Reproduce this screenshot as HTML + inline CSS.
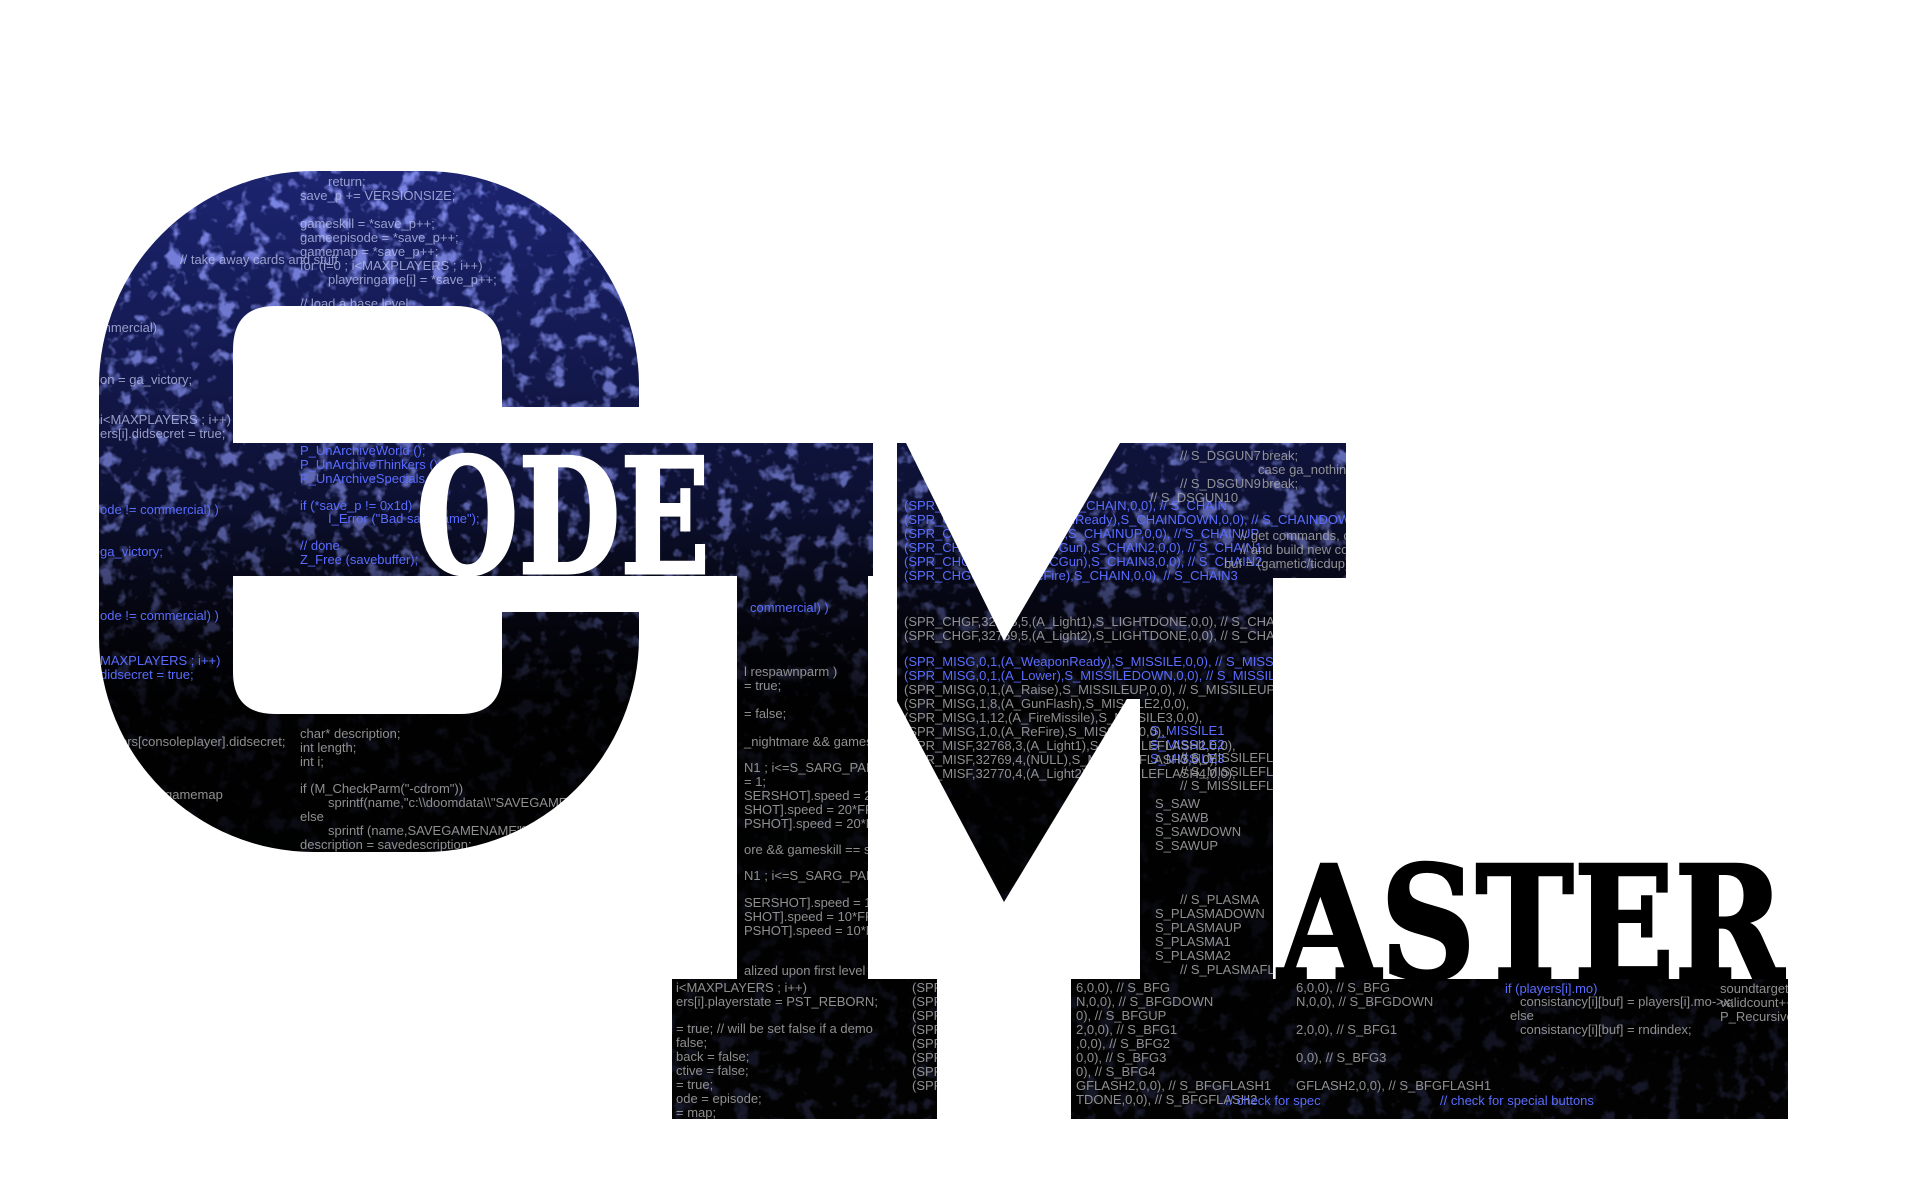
<!DOCTYPE html>
<html><head><meta charset="utf-8"><style>
html,body{margin:0;padding:0;background:#fff;width:1920px;height:1200px;overflow:hidden}
svg{display:block}
.c{font-family:"Liberation Sans Narrow","Liberation Sans",sans-serif;font-size:13px}
</style></head><body>
<svg width="1920" height="1200" viewBox="0 0 1920 1200" xmlns="http://www.w3.org/2000/svg">
<defs>
<linearGradient id="g" x1="0" y1="170" x2="0" y2="1130" gradientUnits="userSpaceOnUse">
<stop offset="0" stop-color="#1c2470"/>
<stop offset="0.18" stop-color="#171e5e"/>
<stop offset="0.33" stop-color="#111644"/>
<stop offset="0.5" stop-color="#0a0c20"/>
<stop offset="0.65" stop-color="#060709"/>
<stop offset="1" stop-color="#0a0a0a"/>
</linearGradient>
<linearGradient id="fade" x1="0" y1="170" x2="0" y2="1130" gradientUnits="userSpaceOnUse">
<stop offset="0" stop-color="#000" stop-opacity="0"/>
<stop offset="0.35" stop-color="#000" stop-opacity="0.25"/>
<stop offset="0.55" stop-color="#000" stop-opacity="0.9"/>
<stop offset="0.8" stop-color="#000" stop-opacity="0.93"/>
<stop offset="1" stop-color="#000" stop-opacity="0.8"/>
</linearGradient>
<filter id="n" x="0" y="0" width="100%" height="100%">
<feTurbulence type="fractalNoise" baseFrequency="0.06" numOctaves="3" seed="4"/>
<feColorMatrix type="matrix" values="0 0 0 0 0.2  0 0 0 0 0.24  0 0 0 0 0.8  0 0 0 5 -2.7"/>
</filter>
<mask id="m" maskUnits="userSpaceOnUse" x="0" y="0" width="1920" height="1200">
<rect x="99" y="171" width="540" height="681" rx="215" ry="215" fill="#fff"/>
<path d="M233 350 Q233 306 275 306 L455 306 Q502 306 502 353 L502 407 L700 407 L700 612 L502 612 L502 672 Q502 714 460 714 L275 714 Q233 714 233 672 Z" fill="#000"/>
<rect x="233" y="443" width="640" height="133" fill="#fff"/>
<rect x="737" y="575" width="131" height="405" fill="#fff"/>
<rect x="672" y="979" width="265" height="140" fill="#fff"/>
<polygon points="897,443 906,443 1004,641 1120,443 1346,443 1346,578 1273,578 1273,980 1140,980 1140,699 1127,699 1004,902 897,701" fill="#fff"/>
<rect x="1071" y="979" width="717" height="140" fill="#fff"/>
</mask>
</defs>
<g mask="url(#m)">
<rect x="0" y="0" width="1920" height="1200" fill="url(#g)"/>
<rect x="0" y="0" width="1920" height="1200" filter="url(#n)"/>
<rect x="0" y="0" width="1920" height="1200" fill="url(#fade)"/>
<g class="c" fill="#b8bee8" opacity="0.8">
<text x="328" y="186">return;</text>
<text x="300" y="200">save_p += VERSIONSIZE;</text>
<text x="300" y="228">gameskill = *save_p++;</text>
<text x="300" y="242">gameepisode = *save_p++;</text>
<text x="300" y="256">gamemap = *save_p++;</text>
<text x="180" y="264">// take away cards and stuff</text>
<text x="300" y="270">for (i=0 ; i&lt;MAXPLAYERS ; i++)</text>
<text x="328" y="284">playeringame[i] = *save_p++;</text>
<text x="300" y="308">// load a base level</text>
<text x="100" y="332">mmercial)</text>
<text x="100" y="384">on = ga_victory;</text>
<text x="100" y="424">i&lt;MAXPLAYERS ; i++)</text>
<text x="100" y="438">ers[i].didsecret = true;</text>
</g>
<g class="c" fill="#5a6cff">
<text x="300" y="455">P_UnArchiveWorld ();</text>
<text x="300" y="469">P_UnArchiveThinkers ();</text>
<text x="300" y="483">P_UnArchiveSpecials ();</text>
<text x="300" y="510">if (*save_p != 0x1d)</text>
<text x="328" y="523">I_Error ("Bad savegame");</text>
<text x="300" y="550">// done</text>
<text x="300" y="564">Z_Free (savebuffer);</text>
<text x="100" y="514">ode != commercial) )</text>
<text x="100" y="556">ga_victory;</text>
<text x="100" y="620">ode != commercial) )</text>
<text x="100" y="665">MAXPLAYERS ; i++)</text>
<text x="100" y="679">didsecret = true;</text>
<text x="750" y="612">commercial) )</text>
<text x="904" y="510">(SPR_CHGG,0,0,(A_Light1),S_CHAIN,0,0), // S_CHAIN</text>
<text x="904" y="524">(SPR_CHGG,0,4,(A_WeaponReady),S_CHAINDOWN,0,0), // S_CHAINDOWN</text>
<text x="904" y="538">(SPR_CHGG,0,1,(A_Raise),S_CHAINUP,0,0), // S_CHAINUP</text>
<text x="904" y="552">(SPR_CHGG,0,4,(A_FireCGun),S_CHAIN2,0,0), // S_CHAIN1</text>
<text x="904" y="566">(SPR_CHGG,1,4,(A_FireCGun),S_CHAIN3,0,0), // S_CHAIN2</text>
<text x="904" y="580">(SPR_CHGG,1,0,(A_ReFire),S_CHAIN,0,0), // S_CHAIN3</text>
<text x="904" y="666">(SPR_MISG,0,1,(A_WeaponReady),S_MISSILE,0,0), // S_MISSILE</text>
<text x="904" y="680">(SPR_MISG,0,1,(A_Lower),S_MISSILEDOWN,0,0), // S_MISSILEDOWN</text>
<text x="1150" y="735">S_MISSILE1</text>
<text x="1150" y="749">S_MISSILE2</text>
<text x="1150" y="763">S_MISSILE3</text>
</g>
<g class="c" fill="#a8a8a8" opacity="0.85">
<text x="1180" y="460">// S_DSGUN7</text>
<text x="1262" y="460">break;</text>
<text x="1258" y="474">case ga_nothing:</text>
<text x="1262" y="488">break;</text>
<text x="1180" y="488">// S_DSGUN9</text>
<text x="1150" y="502">// S_DSGUN10</text>
<text x="1240" y="540">// get commands, check consistancy</text>
<text x="1240" y="554">// and build new consistancy</text>
<text x="1224" y="568">buf = (gametic/ticdup)%BACKUPTICS;</text>
<text x="904" y="626">(SPR_CHGF,32768,5,(A_Light1),S_LIGHTDONE,0,0), // S_CHAINFLASH1</text>
<text x="904" y="640">(SPR_CHGF,32769,5,(A_Light2),S_LIGHTDONE,0,0), // S_CHAINFLASH2</text>
<text x="904" y="694">(SPR_MISG,0,1,(A_Raise),S_MISSILEUP,0,0), // S_MISSILEUP</text>
<text x="904" y="708">(SPR_MISG,1,8,(A_GunFlash),S_MISSILE2,0,0),</text>
<text x="904" y="722">(SPR_MISG,1,12,(A_FireMissile),S_MISSILE3,0,0),</text>
<text x="904" y="736">(SPR_MISG,1,0,(A_ReFire),S_MISSILE,0,0),</text>
<text x="904" y="750">(SPR_MISF,32768,3,(A_Light1),S_MISSILEFLASH2,0,0),</text>
<text x="904" y="764">(SPR_MISF,32769,4,(NULL),S_MISSILEFLASH3,0,0),</text>
<text x="904" y="778">(SPR_MISF,32770,4,(A_Light2),S_MISSILEFLASH4,0,0),</text>
<text x="1180" y="762">// S_MISSILEFLASH1</text>
<text x="1180" y="776">// S_MISSILEFLASH2</text>
<text x="1180" y="790">// S_MISSILEFLASH4</text>
<text x="1155" y="808">S_SAW</text>
<text x="1155" y="822">S_SAWB</text>
<text x="1155" y="836">S_SAWDOWN</text>
<text x="1155" y="850">S_SAWUP</text>
<text x="1180" y="904">// S_PLASMA</text>
<text x="1155" y="918">S_PLASMADOWN</text>
<text x="1155" y="932">S_PLASMAUP</text>
<text x="1155" y="946">S_PLASMA1</text>
<text x="1155" y="960">S_PLASMA2</text>
<text x="1180" y="974">// S_PLASMAFLASH1</text>
<text x="744" y="676">l respawnparm )</text>
<text x="744" y="690">= true;</text>
<text x="744" y="718">= false;</text>
<text x="744" y="746">_nightmare &amp;&amp; gameskill != sk</text>
<text x="744" y="772">N1 ; i&lt;=S_SARG_PAIN2 ; i++</text>
<text x="744" y="786">= 1;</text>
<text x="744" y="800">SERSHOT].speed = 20*FRACU</text>
<text x="744" y="814">SHOT].speed = 20*FRACUNIT</text>
<text x="744" y="828">PSHOT].speed = 20*FRACUN</text>
<text x="744" y="854">ore &amp;&amp; gameskill == sk_nightm</text>
<text x="744" y="880">N1 ; i&lt;=S_SARG_PAIN2 ; i++</text>
<text x="744" y="907">SERSHOT].speed = 15*FRACU</text>
<text x="744" y="921">SHOT].speed = 10*FRACUNIT</text>
<text x="744" y="935">PSHOT].speed = 10*FRACUN</text>
<text x="744" y="975">alized upon first level load</text>
<text x="676" y="992">i&lt;MAXPLAYERS ; i++)</text>
<text x="676" y="1006">ers[i].playerstate = PST_REBORN;</text>
<text x="676" y="1033">= true;          // will be set false if a demo</text>
<text x="676" y="1047">false;</text>
<text x="676" y="1061">back = false;</text>
<text x="676" y="1075">ctive = false;</text>
<text x="676" y="1089">= true;</text>
<text x="676" y="1103">ode = episode;</text>
<text x="676" y="1117">= map;</text>
<text x="300" y="738">char* description;</text>
<text x="300" y="752">int        length;</text>
<text x="300" y="766">int        i;</text>
<text x="300" y="793">if (M_CheckParm("-cdrom"))</text>
<text x="328" y="807">sprintf(name,"c:\\doomdata\\"SAVEGAMENAME"%d.dsg",</text>
<text x="300" y="821">else</text>
<text x="328" y="835">sprintf (name,SAVEGAMENAME"%d.dsg",savegame</text>
<text x="300" y="849">description = savedescription;</text>
<text x="120" y="746">ers[consoleplayer].didsecret;</text>
<text x="165" y="799">gamemap</text>
<text x="1076" y="992">6,0,0),     // S_BFG</text>
<text x="1076" y="1006">N,0,0),     // S_BFGDOWN</text>
<text x="1076" y="1020">0), // S_BFGUP</text>
<text x="1076" y="1034">2,0,0),     // S_BFG1</text>
<text x="1076" y="1048">,0,0),      // S_BFG2</text>
<text x="1076" y="1062">0,0),       // S_BFG3</text>
<text x="1076" y="1076">0), // S_BFG4</text>
<text x="1076" y="1090">GFLASH2,0,0),  // S_BFGFLASH1</text>
<text x="1076" y="1104">TDONE,0,0),    // S_BFGFLASH2</text>
<text x="1296" y="992">6,0,0),     // S_BFG</text>
<text x="1296" y="1006">N,0,0),     // S_BFGDOWN</text>
<text x="1296" y="1034">2,0,0),     // S_BFG1</text>
<text x="1296" y="1062">0,0),       // S_BFG3</text>
<text x="1296" y="1090">GFLASH2,0,0),  // S_BFGFLASH1</text>
<text x="1520" y="1006">consistancy[i][buf] = players[i].mo-&gt;x;</text>
<text x="1510" y="1020">else</text>
<text x="1520" y="1034">consistancy[i][buf] = rndindex;</text>
<text x="1720" y="993">soundtarget =</text>
<text x="1720" y="1007">validcount++;</text>
<text x="1720" y="1021">P_RecursiveSou</text>
<text x="912" y="992">(SPR_BFGG</text>
<text x="912" y="1006">(SPR_BFGG</text>
<text x="912" y="1020">(SPR_BFGG</text>
<text x="912" y="1034">(SPR_BFGG</text>
<text x="912" y="1048">(SPR_BFGG</text>
<text x="912" y="1062">(SPR_BFGG</text>
<text x="912" y="1076">(SPR_BFGG</text>
<text x="912" y="1090">(SPR_BFGG</text>
</g>
<g class="c" fill="#5a6cff">
<text x="1505" y="993">if (players[i].mo)</text>
<text x="1440" y="1105">// check for special buttons</text>
<text x="1226" y="1105">// check for spec</text>
</g>
</g>
<text x="416" y="573" font-family="'DejaVu Serif','Liberation Serif',serif" font-weight="bold" font-size="160" fill="#fff" stroke="#fff" stroke-width="3" stroke-linejoin="miter" textLength="294" lengthAdjust="spacingAndGlyphs">ODE</text>
<text x="1278" y="978" font-family="'DejaVu Serif','Liberation Serif',serif" font-weight="bold" font-size="156" fill="#000" stroke="#000" stroke-width="3" stroke-linejoin="miter" textLength="506" lengthAdjust="spacingAndGlyphs">ASTER</text>
</svg>
</body></html>
